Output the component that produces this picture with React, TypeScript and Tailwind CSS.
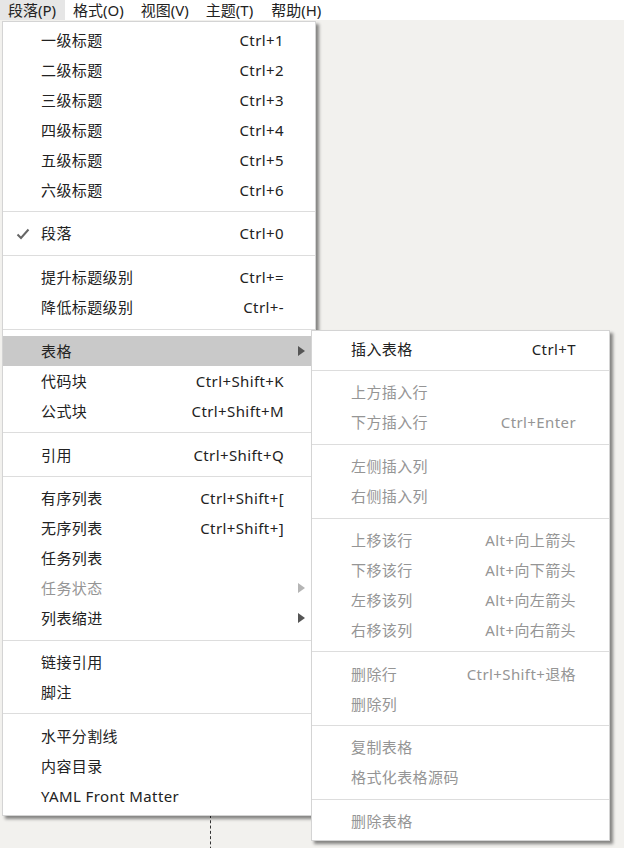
import React from 'react';

type Item =
  | { sep: true }
  | { label: string; key?: string; disabled?: boolean; checked?: boolean; sub?: boolean; active?: boolean };

const font = { fontFamily: '"Noto Sans", "Noto Sans CJK SC", sans-serif' };

const mainItems: Item[] = [
  { label: '一级标题', key: 'Ctrl+1' },
  { label: '二级标题', key: 'Ctrl+2' },
  { label: '三级标题', key: 'Ctrl+3' },
  { label: '四级标题', key: 'Ctrl+4' },
  { label: '五级标题', key: 'Ctrl+5' },
  { label: '六级标题', key: 'Ctrl+6' },
  { sep: true },
  { label: '段落', key: 'Ctrl+0', checked: true },
  { sep: true },
  { label: '提升标题级别', key: 'Ctrl+=' },
  { label: '降低标题级别', key: 'Ctrl+-' },
  { sep: true },
  { label: '表格', sub: true, active: true },
  { label: '代码块', key: 'Ctrl+Shift+K' },
  { label: '公式块', key: 'Ctrl+Shift+M' },
  { sep: true },
  { label: '引用', key: 'Ctrl+Shift+Q' },
  { sep: true },
  { label: '有序列表', key: 'Ctrl+Shift+[' },
  { label: '无序列表', key: 'Ctrl+Shift+]' },
  { label: '任务列表' },
  { label: '任务状态', sub: true, disabled: true },
  { label: '列表缩进', sub: true },
  { sep: true },
  { label: '链接引用' },
  { label: '脚注' },
  { sep: true },
  { label: '水平分割线' },
  { label: '内容目录' },
  { label: 'YAML Front Matter' },
];

const tableItems: Item[] = [
  { label: '插入表格', key: 'Ctrl+T' },
  { sep: true },
  { label: '上方插入行', disabled: true },
  { label: '下方插入行', key: 'Ctrl+Enter', disabled: true },
  { sep: true },
  { label: '左侧插入列', disabled: true },
  { label: '右侧插入列', disabled: true },
  { sep: true },
  { label: '上移该行', key: 'Alt+向上箭头', disabled: true },
  { label: '下移该行', key: 'Alt+向下箭头', disabled: true },
  { label: '左移该列', key: 'Alt+向左箭头', disabled: true },
  { label: '右移该列', key: 'Alt+向右箭头', disabled: true },
  { sep: true },
  { label: '删除行', key: 'Ctrl+Shift+退格', disabled: true },
  { label: '删除列', disabled: true },
  { sep: true },
  { label: '复制表格', disabled: true },
  { label: '格式化表格源码', disabled: true },
  { sep: true },
  { label: '删除表格', disabled: true },
];

function MenuList({ items, padLeft, padRight }: { items: Item[]; padLeft: string; padRight: string }) {
  return (
    <div className="pt-[3px] pb-[4px]">
      {items.map((it, i) => {
        if ('sep' in it) {
          return (
            <div key={i} className="h-[13.7px] flex items-center">
              <div className="h-px w-full bg-[#dddddd]" />
            </div>
          );
        }
        return (
          <div
            key={i}
            className={`relative h-[30px] flex items-center justify-between text-[15px] tracking-[0.4px] ${padLeft} ${padRight} ${
              it.active ? 'bg-[#c9c9c9]' : ''
            } ${it.disabled ? 'text-[#959595]' : 'text-[#222]'}`}
          >
            {it.checked && (
              <svg className="absolute left-[13px] top-[9px]" width="14" height="12" viewBox="0 0 14 12">
                <path d="M1.5 6.5 L5 10 L12.5 1.5" fill="none" stroke="#666" strokeWidth="2" />
              </svg>
            )}
            <span>{it.label}</span>
            {it.key && <span>{it.key}</span>}
            {it.sub && (
              <svg className="absolute right-[10px] top-[10px]" width="7" height="10" viewBox="0 0 7 10">
                <path d="M0 0 L7 5 L0 10 Z" fill={it.disabled ? '#b5b5b5' : '#555'} />
              </svg>
            )}
          </div>
        );
      })}
    </div>
  );
}

export default function App() {
  return (
    <div className="relative w-[624px] h-[848px] overflow-hidden bg-[#f2f1ee]" style={font}>
      {/* Menubar */}
      <div className="h-[20px] bg-white flex items-center text-[15px] text-[#222] leading-[20px]">
        <div className="pl-[8px] pr-[9px] bg-[#e6e6e6]">段落(P)</div>
        <div className="pl-[8px] pr-[9px]">格式(O)</div>
        <div className="pl-[8px] pr-[9px]">视图(V)</div>
        <div className="pl-[8px] pr-[9px]">主题(T)</div>
        <div className="pl-[9px] pr-[9px]">帮助(H)</div>
      </div>

      {/* Editor content */}
      <div className="ml-[210px] mt-[795px] h-[40px] border-l border-dashed border-[#333]" />

      {/* 段落 menu */}
      <div className="absolute left-[2px] top-[21px] w-[314px] bg-white border border-[#d4d4d4] shadow-[3px_3px_3px_rgba(0,0,0,0.45)]">
        <MenuList items={mainItems} padLeft="pl-[38px]" padRight="pr-[31px]" />
      </div>

      {/* 表格 submenu */}
      <div className="absolute left-[311px] top-[330px] w-[299px] bg-white border border-[#d4d4d4] shadow-[3px_3px_3px_rgba(0,0,0,0.45)]">
        <MenuList items={tableItems} padLeft="pl-[39px]" padRight="pr-[33px]" />
      </div>
    </div>
  );
}
